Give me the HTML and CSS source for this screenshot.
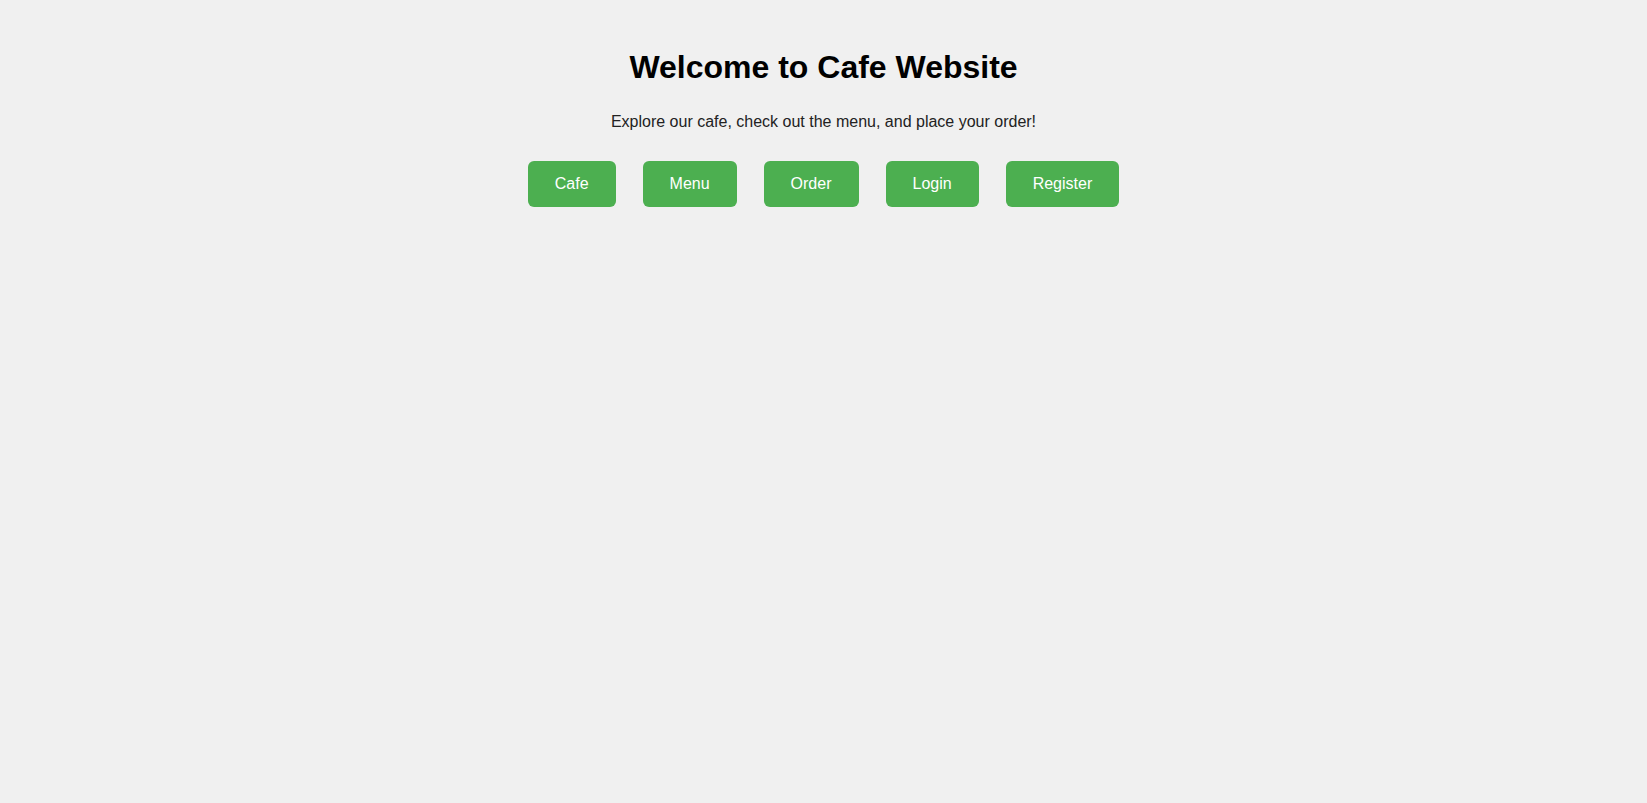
FILE: index.html
```html
<!DOCTYPE html>
<html lang="en">
<head>
<meta charset="UTF-8">
<title>Cafe Website</title>
<link rel="stylesheet" href="styles.css">
</head>
<body>
<main class="home">
  <h1 class="home-title">Welcome to Cafe Website</h1>
  <p class="home-intro">Explore our cafe, check out the menu, and place your order!</p>
  <nav class="home-nav">
    <a class="nav-btn" href="#">Cafe</a>
    <a class="nav-btn" href="#">Menu</a>
    <a class="nav-btn" href="#">Order</a>
    <a class="nav-btn" href="#">Login</a>
    <a class="nav-btn" href="#">Register</a>
  </nav>
</main>
</body>
</html>
```

FILE: styles.css
```css
html, body {
  margin: 0;
  padding: 0;
  background: #f0f0f0;
}

body {
  font-family: "Liberation Sans", Arial, sans-serif;
  color: #333;
}

.home {
  display: flex;
  flex-direction: column;
  align-items: center;
  text-align: center;
  padding-top: 49px;
}

.home-title {
  margin: 0 0 27px;
  font-size: 32px;
  font-weight: bold;
  color: #000;
  line-height: normal;
}

.home-intro {
  margin: 0 0 30px;
  font-size: 16px;
  line-height: normal;
  color: #222;
}

.home-nav {
  display: flex;
  gap: 27px;
}

.nav-btn {
  display: block;
  padding: 14px 27px;
  background: #4caf50;
  color: #fff;
  font-size: 16px;
  line-height: 18px;
  text-decoration: none;
  border-radius: 6px;
}
```
